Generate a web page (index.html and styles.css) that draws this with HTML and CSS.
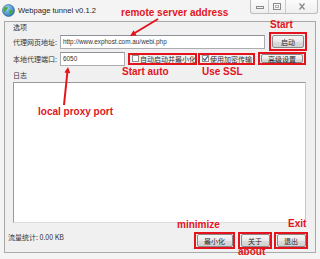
FILE: index.html
```html
<!DOCTYPE html>
<html>
<head>
<meta charset="utf-8">
<link rel="stylesheet" href="styles.css">
</head>
<body>
<div class="window">
  <div class="titlebar">
    <svg class="appicon" width="13" height="13" viewBox="0 0 13 13">
      <defs>
        <radialGradient id="g" cx="0.35" cy="0.3" r="0.8">
          <stop offset="0" stop-color="#9fd8f5"/>
          <stop offset="1" stop-color="#1f6fb5"/>
        </radialGradient>
      </defs>
      <circle cx="6.5" cy="6.5" r="6" fill="url(#g)" stroke="#2b5f8e" stroke-width="0.6"/>
      <path d="M3 3.2 C4.5 2.4 6 3 5.6 4.4 C5.2 5.6 3.6 5.4 3.8 7 C4 8.2 2.6 8.4 1.8 7.2 C1.2 5.6 1.8 4 3 3.2Z" fill="#4fa83a"/>
      <path d="M7.6 6 C9 5.4 10.8 6.2 10.6 8 C10.4 9.6 8.8 11 7.8 10.2 C7.2 9.4 7.8 8.6 7.2 7.6 C6.8 6.8 7 6.3 7.6 6Z" fill="#4fa83a"/>
    </svg>
    <span class="title">Webpage tunnel v0.1.2</span>
    <div class="caption">
      <span class="cbtn cmin"><svg width="10" height="6" viewBox="0 0 10 6"><rect x="1.5" y="2.5" width="7" height="2" fill="none" stroke="#8a8a8a"/></svg></span>
      <span class="cbtn cmax"><svg width="10" height="9" viewBox="0 0 10 9"><rect x="1.5" y="1.5" width="7" height="6" fill="none" stroke="#8a8a8a"/><rect x="3.5" y="3.5" width="3" height="2" fill="none" stroke="#b0b0b0"/></svg></span>
      <span class="cbtn cclose"><svg width="10" height="9" viewBox="0 0 10 9"><path d="M2.5 1.5 L7.5 7.5 M7.5 1.5 L2.5 7.5" stroke="#8a8a8a" stroke-width="1.3"/></svg></span>
    </div>
  </div>
  <div class="client">
    <div class="grp">选项</div>
    <div class="row row1">
      <span class="lbl">代理网页地址:</span>
      <div class="input url">http://www.exphost.com.au/webi.php</div>
      <div class="hl hl-start"><span class="btn">启动</span></div>
    </div>
    <div class="row row2">
      <span class="lbl">本地代理端口:</span>
      <div class="input port">6050</div>
      <div class="hl chk chk1"><span class="box"></span><span>自动启动并最小化</span></div>
      <div class="hl chk chk2"><span class="box"><svg width="7" height="7" viewBox="0 0 7 7"><path d="M1.2 3.4 L2.9 5.4 L5.8 1.2" fill="none" stroke="#2c4a8c" stroke-width="1.1"/></svg></span><span>使用加密传输</span></div>
      <div class="hl hl-adv"><span class="btn">高级设置</span></div>
    </div>
    <div class="grp grp2">日志</div>
    <div class="log"></div>
    <div class="status">
      <span class="stat">流量统计: 0.00 KB</span>
      <div class="bbtns">
        <div class="hl hl-b b1"><span class="btn">最小化</span></div>
        <div class="hl hl-b b2"><span class="btn">关于</span></div>
        <div class="hl hl-b b3"><span class="btn">退出</span></div>
      </div>
    </div>
  </div>

  <svg class="arrows" width="320" height="259" viewBox="0 0 320 259">
    <path d="M158 19 L133 34" stroke="#e3141d" stroke-width="2"/>
    <path d="M130 36 L136.7 35.5 L133.6 30.3 Z" fill="#e3141d"/>
    <path d="M64 105 L67.5 71" stroke="#e3141d" stroke-width="2"/>
    <path d="M68 67 L70.3 73.3 L64.4 72.6 Z" fill="#e3141d"/>
  </svg>
  <span class="note n-remote">remote server address</span>
  <span class="note n-start">Start</span>
  <span class="note n-auto">Start auto</span>
  <span class="note n-ssl">Use SSL</span>
  <span class="note n-port">local proxy port</span>
  <span class="note n-min">minimize</span>
  <span class="note n-exit">Exit</span>
  <span class="note n-about">about</span>
</div>
</body>
</html>
```

FILE: styles.css
```css
* { box-sizing: border-box; }
html, body { margin: 0; padding: 0; }
body {
  width: 320px;
  height: 259px;
  overflow: hidden;
  background: #f3f3f3;
  font-family: "Liberation Sans", "Noto Sans CJK SC", sans-serif;
  color: #333;
}
.window {
  position: relative;
  width: 320px;
  height: 259px;
  background: #f4f4f4;
  display: flex;
  flex-direction: column;
}
.titlebar {
  height: 21px;
  flex-shrink: 0;
  display: flex;
  align-items: flex-start;
}
.appicon { margin: 4px 0 0 2px; flex-shrink: 0; }
.title {
  margin: 5px 0 0 3px;
  font-family: "Liberation Sans", sans-serif;
  font-size: 7.6px;
  line-height: 12px;
  color: #1e1e1e;
}
.caption {
  margin-left: auto;
  margin-right: 2px;
  display: flex;
  height: 14px;
  border: 1px solid #bdbdbd;
  border-top: none;
  border-radius: 0 0 3px 3px;
  background: linear-gradient(#fbfbfb, #efefef);
}
.cbtn {
  display: flex;
  align-items: center;
  justify-content: center;
  height: 13px;
}
.cmin { width: 18px; border-right: 1px solid #cacaca; }
.cmax { width: 17px; border-right: 1px solid #cacaca; }
.cclose { width: 31px; }

.client {
  flex: 1;
  margin: 0 4px 6px 4px;
  border: 1px solid #a9a9a9;
  background: #f0f0f0;
  display: flex;
  flex-direction: column;
  padding: 0 9px 0 8px;
}
.grp {
  font-family: "Noto Sans CJK SC", sans-serif;
  font-size: 7px;
  line-height: 10px;
  height: 10px;
}
.grp2 { margin-top: 4px; }
.row {
  display: flex;
  align-items: center;
  flex-shrink: 0;
}
.row > * { flex-shrink: 0; }
.row1 { height: 17px; margin-top: 1px; }
.row2 { height: 15px; margin-top: 1px; }
.lbl {
  width: 47px;
  font-family: "Noto Sans CJK SC", sans-serif;
  font-size: 7px;
  line-height: 10px;
  white-space: nowrap;
}
.input {
  height: 14px;
  background: #fff;
  border: 1px solid #abadb3;
  border-top-color: #8e9197;
  font-family: "Liberation Sans", sans-serif;
  font-size: 6.4px;
  line-height: 12px;
  padding-left: 2px;
  color: #333;
  white-space: nowrap;
}
.url { width: 205px; }
.port { width: 65px; }

.hl {
  border: 2px solid #e3141d;
  display: flex;
  align-items: center;
  justify-content: center;
}
.btn {
  display: flex;
  align-items: center;
  justify-content: center;
  border: 1px solid #8a8a8a;
  border-radius: 2px;
  background: linear-gradient(#f6f6f6 0%, #e9e9e9 50%, #dcdcdc 51%, #d2d2d2 100%);
  font-family: "Noto Sans CJK SC", sans-serif;
  font-size: 7px;
  line-height: 8px;
  color: #2a2a2a;
}
.hl-start { width: 38px; height: 19px; margin-left: 4px; padding: 1px; }
.hl-start .btn { width: 32px; height: 13px; }
.hl-adv { width: 48px; height: 13px; margin-left: 3px; }
.hl-adv .btn { width: 42px; height: 9px; }

.chk {
  height: 12px;
  justify-content: flex-start;
  font-family: "Noto Sans CJK SC", sans-serif;
  font-size: 7px;
  line-height: 8px;
  white-space: nowrap;
  overflow: hidden;
  padding-left: 2px;
}
.chk1 { width: 69px; margin-left: 3px; }
.chk2 { width: 57px; margin-left: 1px; }
.box {
  width: 7px;
  height: 7px;
  border: 1px solid #8f8f8f;
  background: #fff;
  margin-right: 1px;
  flex-shrink: 0;
  display: flex;
  align-items: center;
  justify-content: center;
}
.box svg { margin: -1px; flex-shrink: 0; }

.log {
  margin-top: 2px;
  height: 141px;
  flex-shrink: 0;
  background: #fff;
  border: 1px solid #9a9a9a;
  border-right-color: #c8c8c8;
  border-bottom-color: #dcdcdc;
}
.status {
  flex: 1;
  display: flex;
  align-items: flex-start;
  margin-left: -5px;
  margin-right: -2px;
}
.stat {
  margin-top: 9px;
  font-family: "Noto Sans CJK SC", sans-serif;
  font-size: 7px;
  line-height: 10px;
  white-space: nowrap;
}
.bbtns {
  margin-left: auto;
  margin-top: 9px;
  display: flex;
}
.hl-b { height: 17px; }
.hl-b .btn { height: 13px; }
.b1 { width: 41px; }
.b1 .btn { width: 36px; }
.b2 { width: 34px; margin-left: 3px; }
.b2 .btn { width: 29px; }
.b3 { width: 34px; margin-left: 2px; }
.b3 .btn { width: 29px; }

.arrows { position: absolute; left: 0; top: 0; pointer-events: none; }
.note {
  position: absolute;
  font-family: "Liberation Sans", sans-serif;
  font-weight: bold;
  font-size: 10px;
  line-height: 10px;
  color: #e3141d;
  white-space: nowrap;
}
.n-remote { left: 121px; top: 8px; }
.n-start { left: 270px; top: 20px; }
.n-auto { left: 122px; top: 67px; }
.n-ssl { left: 202px; top: 67px; }
.n-port { left: 38px; top: 107px; }
.n-min { left: 177px; top: 220px; }
.n-exit { left: 288px; top: 219px; }
.n-about { left: 238px; top: 247px; }
```
